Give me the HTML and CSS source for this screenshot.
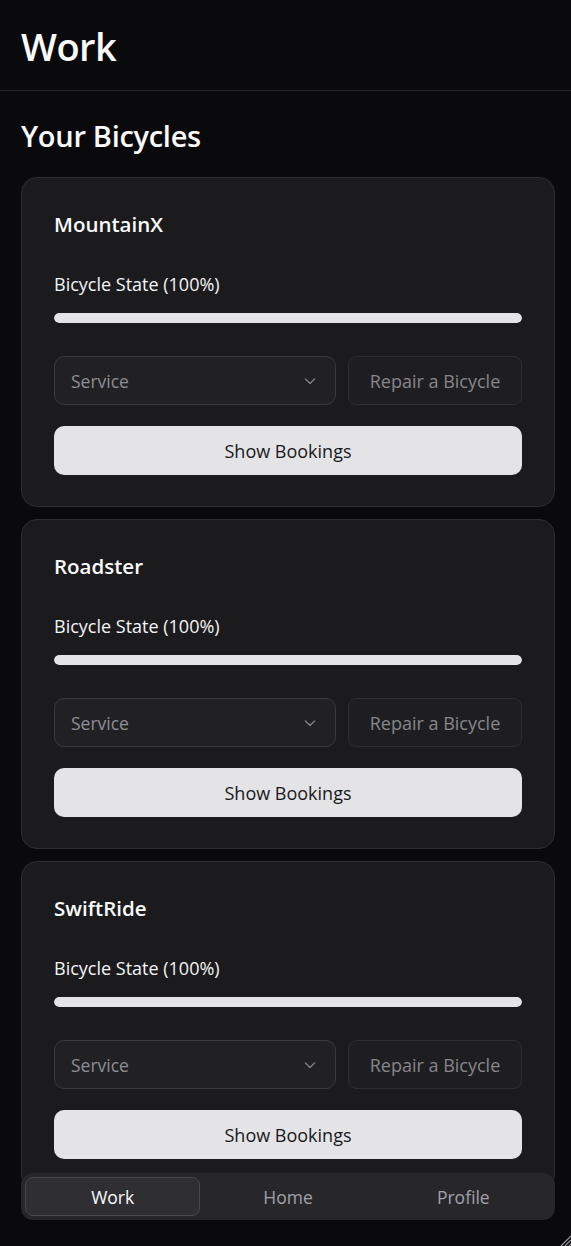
FILE: index.html
```html
<!DOCTYPE html>
<html lang="en">
<head>
<meta charset="utf-8">
<title>Work</title>
<link rel="stylesheet" href="styles.css">
</head>
<body>
<header class="topbar"><h1 class="page-title">Work</h1></header>
<main class="content">
  <h2 class="section-title">Your Bicycles</h2>
  <div class="cards">
    <section class="card">
      <h3 class="bike-name">MountainX</h3>
      <div class="state-label">Bicycle State (100%)</div>
      <div class="progress"><div class="progress-fill" style="width:100%"></div></div>
      <div class="actions">
        <div class="select">Service
          <svg class="chev" viewBox="0 0 16 16" width="16" height="16"><path d="M3.5 6l4.5 4.5L12.5 6" fill="none" stroke="#7c7c82" stroke-width="1.5" stroke-linecap="round" stroke-linejoin="round"/></svg>
        </div>
        <button class="repair">Repair a Bicycle</button>
      </div>
      <button class="bookings">Show Bookings</button>
    </section>
    <section class="card">
      <h3 class="bike-name">Roadster</h3>
      <div class="state-label">Bicycle State (100%)</div>
      <div class="progress"><div class="progress-fill" style="width:100%"></div></div>
      <div class="actions">
        <div class="select">Service
          <svg class="chev" viewBox="0 0 16 16" width="16" height="16"><path d="M3.5 6l4.5 4.5L12.5 6" fill="none" stroke="#7c7c82" stroke-width="1.5" stroke-linecap="round" stroke-linejoin="round"/></svg>
        </div>
        <button class="repair">Repair a Bicycle</button>
      </div>
      <button class="bookings">Show Bookings</button>
    </section>
    <section class="card">
      <h3 class="bike-name">SwiftRide</h3>
      <div class="state-label">Bicycle State (100%)</div>
      <div class="progress"><div class="progress-fill" style="width:100%"></div></div>
      <div class="actions">
        <div class="select">Service
          <svg class="chev" viewBox="0 0 16 16" width="16" height="16"><path d="M3.5 6l4.5 4.5L12.5 6" fill="none" stroke="#7c7c82" stroke-width="1.5" stroke-linecap="round" stroke-linejoin="round"/></svg>
        </div>
        <button class="repair">Repair a Bicycle</button>
      </div>
      <button class="bookings">Show Bookings</button>
    </section>
  </div>
</main>
<nav class="tabbar">
  <button class="tab active">Work</button>
  <button class="tab">Home</button>
  <button class="tab">Profile</button>
</nav>
<svg class="grip" viewBox="0 0 12 12" width="12" height="12"><path d="M12 2L2 12M12 6L6 12M12 10L10 12" stroke="#9a9a9e" stroke-width="1.2"/></svg>
</body>
</html>
```
FILE: styles.css
```css
* { box-sizing: border-box; }
html, body { margin: 0; padding: 0; }
body {
  background: #0a0a0c;
  color: #fafafa;
  font-family: "Segoe UI", "Open Sans", "Noto Sans", sans-serif;
  height: 1246px;
  overflow: hidden;
}
.topbar {
  height: 91px;
  border-bottom: 1px solid #27272a;
  padding: 0 21px;
  display: flex;
  align-items: center;
}
.page-title {
  margin: 0;
  font-size: 38px;
  font-weight: 600;
  letter-spacing: -0.5px;
  line-height: 1;
  padding-top: 2px;
}
.content { padding: 0 16px 0 21px; }
.section-title {
  margin: 0;
  padding-top: 27px;
  height: 86px;
  font-size: 29px;
  font-weight: 600;
  letter-spacing: -0.3px;
  line-height: 36px;
}
.cards { display: flex; flex-direction: column; gap: 12px; }
.card {
  background: #1b1b1d;
  border: 1px solid #2e2e31;
  border-radius: 16px;
  padding: 32px 32px 32px 32px;
  height: 330px;
}
.bike-name {
  margin: 0;
  font-size: 20.5px;
  font-weight: 600;
  line-height: 28px;
  height: 28px;
}
.state-label {
  margin-top: 34px;
  font-size: 18px;
  line-height: 24px;
  color: #f4f4f5;
}
.progress {
  margin-top: 17px;
  height: 10px;
  background: #3f3f46;
  border-radius: 5px;
  overflow: hidden;
}
.progress-fill { height: 100%; background: #e4e4e7; border-radius: 5px; }
.actions {
  margin-top: 33px;
  display: flex;
  gap: 12px;
}
.select {
  flex: 1;
  height: 49px;
  border: 1px solid #3a3a3e;
  background: #212124;
  border-radius: 10px;
  display: flex;
  align-items: center;
  justify-content: space-between;
  padding: 0 17px 0 16px;
  font-size: 17.5px;
  color: #8e8e94;
}
.chev { display: block; }
button {
  font-family: inherit;
  cursor: pointer;
}
.repair {
  width: 174px;
  height: 49px;
  border: 1px solid #2e2e31;
  background: #1e1e21;
  border-radius: 8px;
  color: #86868b;
  font-size: 18px;
  padding: 0;
}
.bookings {
  margin-top: 21px;
  width: 100%;
  height: 49px;
  border: none;
  border-radius: 10px;
  background: #e4e4e7;
  color: #18181b;
  font-size: 18px;
}
.tabbar {
  position: fixed;
  left: 21px;
  right: 16px;
  bottom: 26px;
  height: 47px;
  background: #27272a;
  border-radius: 12px;
  padding: 4px;
  display: grid;
  grid-template-columns: 1fr 1fr 1fr;
}
.tab {
  border: 1px solid transparent;
  background: transparent;
  border-radius: 8px;
  color: #a1a1aa;
  font-size: 17.5px;
  padding: 1px 0 0;
}
.tab.active {
  background: #2f2f33;
  border-color: #48484c;
  color: #fafafa;
}
.grip {
  position: fixed;
  right: 0;
  bottom: 0;
}
```
